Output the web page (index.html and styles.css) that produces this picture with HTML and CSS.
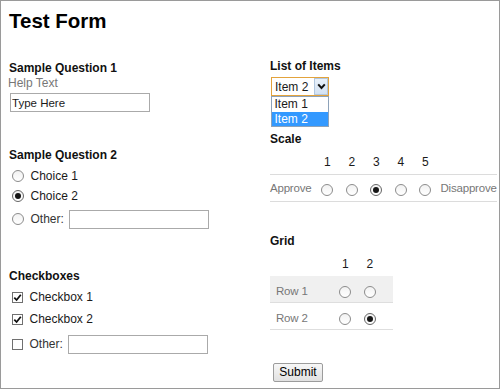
FILE: index.html
```html
<!DOCTYPE html>
<html lang="en">
<head>
<meta charset="utf-8">
<title>Test Form</title>
<link rel="stylesheet" href="styles.css">
</head>
<body>
<div class="frame">
  <h1 class="title">Test Form</h1>
  <div class="cols">
    <div class="col">
      <section class="q q1">
        <div class="qh">Sample Question 1</div>
        <div class="help">Help Text</div>
        <input class="text" type="text" value="Type Here">
      </section>

      <section class="q q2">
        <div class="qh">Sample Question 2</div>
        <div class="opts radios">
          <div class="opt"><span class="radio"></span><span class="lbl">Choice 1</span></div>
          <div class="opt"><span class="radio on"></span><span class="lbl">Choice 2</span></div>
          <div class="opt other"><span class="radio"></span><span class="lbl">Other:</span><input class="text inline" type="text"></div>
        </div>
      </section>

      <section class="q q3">
        <div class="qh">Checkboxes</div>
        <div class="opts checks">
          <div class="opt"><span class="cbox"><svg width="9" height="9" viewBox="0 0 9 9"><path d="M1.3 4.6 L3.6 7 L7.8 1.8" fill="none" stroke="#111" stroke-width="1.8"/></svg></span><span class="lbl">Checkbox 1</span></div>
          <div class="opt"><span class="cbox"><svg width="9" height="9" viewBox="0 0 9 9"><path d="M1.3 4.6 L3.6 7 L7.8 1.8" fill="none" stroke="#111" stroke-width="1.8"/></svg></span><span class="lbl">Checkbox 2</span></div>
          <div class="opt other"><span class="cbox"></span><span class="lbl">Other:</span><input class="text inline" type="text"></div>
        </div>
      </section>
    </div>

    <div class="col">
      <section class="q">
        <div class="qh">List of Items</div>
        <div class="select">
          <span class="val">Item 2</span>
          <span class="arrow"><svg width="9" height="7" viewBox="0 0 9 7"><path d="M1.2 1.4 L4.5 5 L7.8 1.4" fill="none" stroke="#111" stroke-width="2"/></svg></span>
          <div class="menu">
            <div class="item">Item 1</div>
            <div class="item sel">Item 2</div>
          </div>
        </div>
      </section>

      <section class="q scale-q">
        <div class="qh">Scale</div>
        <div class="scale">
          <div class="srow shead">
            <span></span><span class="c">1</span><span class="c">2</span><span class="c">3</span><span class="c">4</span><span class="c">5</span><span></span>
          </div>
          <div class="srow sbody">
            <span class="glbl">Approve</span>
            <span class="c"><span class="radio"></span></span>
            <span class="c"><span class="radio"></span></span>
            <span class="c"><span class="radio on"></span></span>
            <span class="c"><span class="radio"></span></span>
            <span class="c"><span class="radio"></span></span>
            <span class="glbl end">Disapprove</span>
          </div>
        </div>
      </section>

      <section class="q grid-q">
        <div class="qh">Grid</div>
        <div class="grid">
          <div class="grow ghead"><span></span><span class="c">1</span><span class="c">2</span><span></span></div>
          <div class="grow gbody alt"><span class="glbl rl">Row 1</span><span class="c"><span class="radio"></span></span><span class="c"><span class="radio"></span></span><span></span></div>
          <div class="grow gbody"><span class="glbl rl">Row 2</span><span class="c"><span class="radio"></span></span><span class="c"><span class="radio on"></span></span><span></span></div>
        </div>
      </section>

      <button class="submit" type="button">Submit</button>
    </div>
  </div>
</div>
</body>
</html>
```

FILE: styles.css
```css
* { box-sizing: border-box; }
html, body { margin: 0; padding: 0; background: #fff; }
body {
  font-family: "Liberation Sans", Arial, sans-serif;
  font-size: 12px;
  color: #1a1a1a;
}
.frame {
  width: 500px;
  height: 389px;
  border: 1px solid #9a9a9a;
  padding: 8px 2px 0 8px;
  overflow: hidden;
}
.title {
  margin: 0 0 26px 0;
  font-size: 20.5px;
  line-height: 24px;
  font-weight: bold;
  color: #000;
}
.cols {
  display: grid;
  grid-template-columns: 261px 1fr;
}
.col { display: flex; flex-direction: column; align-items: flex-start; }
.q { display: flex; flex-direction: column; align-items: flex-start; }
.qh { font-weight: bold; line-height: 15px; color: #111; white-space: nowrap; }
.q1 { margin-top: 2px; }
.help { color: #777; line-height: 15px; margin-left: -1px; }
.text {
  display: block;
  width: 140px;
  height: 19px;
  margin: 2px 0 0 1px;
  border: 1px solid #aaa;
  padding: 0 1px;
  font-family: "Liberation Sans", Arial, sans-serif;
  font-size: 11.5px;
  color: #1a1a1a;
  background: #fff;
  outline: none;
}
.text.inline { margin: 0 0 0 5px; }
.q2 { margin-top: 36px; }
.q3 { margin-top: 40px; }
.opts { display: flex; flex-direction: column; }
.radios { margin-top: 3px; }
.radios .opt { height: 20px; }
.checks { margin-top: 2px; }
.checks .opt { height: 22px; }
.opt { display: flex; align-items: center; white-space: nowrap; }
.opt.other { margin-top: 3px; }
.lbl { margin-left: 6.5px; color: #1a1a1a; }
.other .lbl { color: #333; }

.radio {
  width: 12px;
  height: 12px;
  flex: none;
  border: 1px solid #8c8c8c;
  border-radius: 50%;
  background: linear-gradient(#f2f2f2, #fff);
  display: flex;
  align-items: center;
  justify-content: center;
}
.opt .radio { margin-left: 3px; }
.radio.on { border-color: #666; }
.radio.on::after {
  content: "";
  width: 6px;
  height: 6px;
  border-radius: 50%;
  background: #161616;
}
.cbox {
  width: 11px;
  height: 11px;
  flex: none;
  margin-left: 3px;
  border: 1px solid #707070;
  background: #fff;
  display: flex;
  align-items: center;
  justify-content: center;
}
.cbox + .lbl { margin-left: 6.5px; }
.cbox svg { display: block; }

/* select */
.select {
  position: relative;
  margin: 3px 0 0 1px;
  width: 58px;
  height: 19px;
  border: 1px solid #e3a33c;
  display: flex;
  align-items: stretch;
  background: #fff;
}
.select .val { flex: 1; padding: 1px 0 0 3px; line-height: 17px; color: #1a1a1a; }
.arrow {
  width: 14px;
  border: 1px solid #b2c7df;
  background: linear-gradient(#e9f1fa, #d3e2f3);
  display: flex;
  align-items: center;
  justify-content: center;
}
.arrow svg { display: block; }
.menu {
  position: absolute;
  left: -1px;
  top: calc(100% + 1px);
  width: 58px;
  border: 1px solid #8da2b9;
  background: #fff;
}
.item { line-height: 15px; height: 14.5px; padding-left: 2.5px; color: #1a1a1a; }
.item.sel { background: #3399ff; color: #fff; }

/* scale */
.scale-q { margin-top: 36px; width: 100%; }
.scale { margin-top: 5px; width: 100%; }
.srow {
  display: grid;
  grid-template-columns: 45px repeat(5, 24.5px) 1fr;
  align-items: center;
}
.shead { height: 22px; line-height: 16px; padding-top: 2px; align-items: start; }
.sbody { height: 28px; border-top: 1px solid #dcdcdc; border-bottom: 1px solid #dcdcdc; }
.c { display: flex; justify-content: center; align-items: center; color: #1a1a1a; }
.c .radio { margin-top: 3px; }
.glbl { color: #777; font-size: 11.5px; letter-spacing: -0.2px; white-space: nowrap; }
.glbl.end { padding-left: 3px; }

/* grid */
.grid-q { margin-top: 32px; }
.grid { margin-top: 5px; width: 123px; }
.grow {
  display: grid;
  grid-template-columns: 63px 24.5px 24.5px 11px;
  align-items: center;
}
.ghead { height: 22px; line-height: 16px; padding-top: 2px; align-items: start; }
.gbody { height: 27px; padding-top: 3px; border-bottom: 1px solid #dedede; }
.gbody.alt { background: #f0f0f0; }
.glbl.rl { padding-left: 6px; }

.submit {
  margin: 33px 0 0 3px;
  width: 50px;
  height: 19px;
  padding: 0;
  border: 1px solid #9c9c9c;
  border-radius: 2px;
  background: linear-gradient(#f7f7f7, #e1e1e1);
  font-family: "Liberation Sans", Arial, sans-serif;
  font-size: 12px;
  color: #000;
  line-height: 17px;
}
```
